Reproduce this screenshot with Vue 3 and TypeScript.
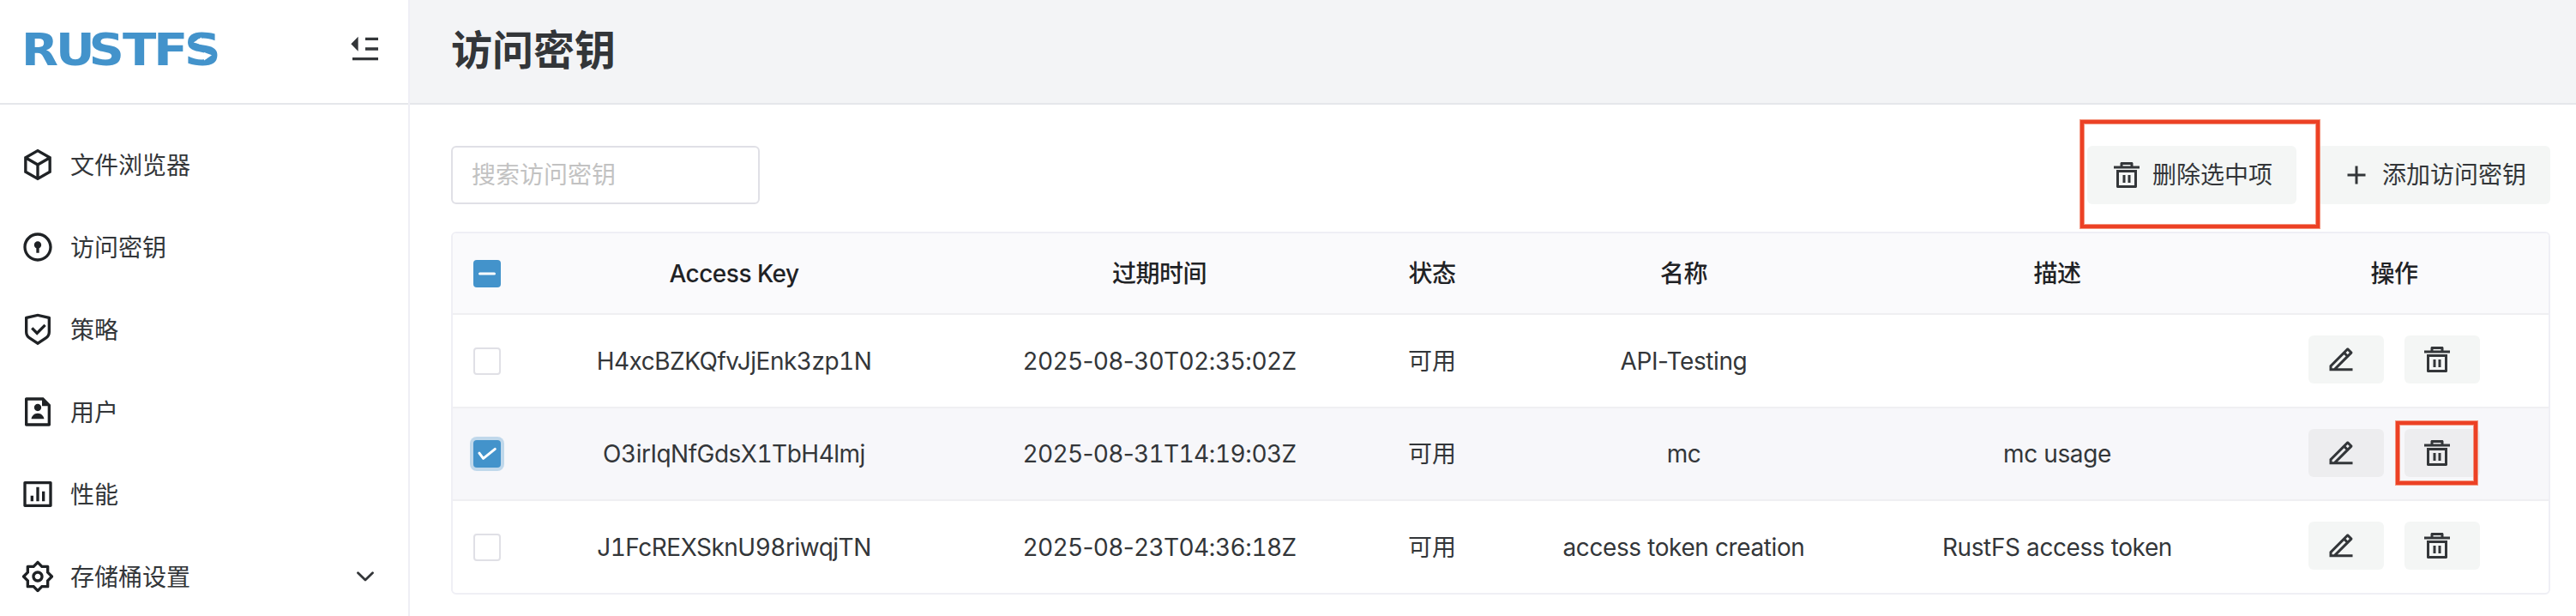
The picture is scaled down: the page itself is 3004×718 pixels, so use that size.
<script setup lang="ts">
interface NavItem {
  label: string
  icon: string
  expandable?: boolean
}

interface KeyRow {
  accessKey: string
  expiration: string
  status: string
  name: string
  description: string
  checked: boolean
}

interface LogoLetter {
  char: string
  x: number
  width: number
}

const logoLetters: LogoLetter[] = [
  { char: 'R', x: 0.9, width: 43 },
  { char: 'U', x: 41, width: 45.6 },
  { char: 'S', x: 79.6, width: 41.4 },
  { char: 'T', x: 119, width: 39.4 },
  { char: 'F', x: 155, width: 40.4 },
  { char: 'S', x: 190.7, width: 43 },
]

const icons: Record<string, string> = {
  box: 'M12 1L21.5 6.5V17.5L12 23L2.5 17.5V6.5L12 1ZM5.494 7.078L12 10.844L18.506 7.078L12 3.311L5.494 7.078ZM4.5 8.813V16.347L11 20.11V12.577L4.5 8.813ZM13 20.11L19.5 16.347V8.813L13 12.577V20.11Z',
  lock: 'M12 22C6.477 22 2 17.523 2 12S6.477 2 12 2S22 6.477 22 12S17.523 22 12 22ZM12 20C16.418 20 20 16.418 20 12S16.418 4 12 4S4 7.582 4 12S7.582 20 12 20ZM11 12.792C10.118 12.406 9.5 11.525 9.5 10.5C9.5 9.119 10.619 8 12 8S14.5 9.119 14.5 10.5C14.5 11.525 13.882 12.406 13 12.792V16H11V12.792Z',
  shield: 'M12 1L20.217 2.826C20.675 2.928 21 3.333 21 3.802V13.789C21 15.795 19.997 17.668 18.328 18.781L12 23L5.672 18.781C4.003 17.668 3 15.795 3 13.789V3.802C3 3.333 3.326 2.928 3.783 2.826L12 1ZM12 3.049L5 4.604V13.789C5 15.126 5.668 16.375 6.781 17.117L12 20.596L17.219 17.117C18.332 16.375 19 15.126 19 13.789V4.604L12 3.049ZM16.452 8.222L17.867 9.636L11.503 16L7.26 11.757L8.674 10.343L11.502 13.171L16.452 8.222Z',
  user: 'M15 4H5V20H19V8H15V4ZM3 2.992C3 2.444 3.447 2 3.999 2H16L21 7V20.993C21 21.549 20.555 22 20.007 22H3.993C3.445 22 3 21.545 3 21.008V2.992ZM12 11.5C10.619 11.5 9.5 10.381 9.5 9S10.619 6.5 12 6.5S14.5 7.619 14.5 9S13.381 11.5 12 11.5ZM7.527 17C7.776 14.75 9.684 13 12 13S16.224 14.75 16.473 17H7.527Z',
  chart: 'M3 3H21C21.552 3 22 3.448 22 4V20C22 20.552 21.552 21 21 21H3C2.448 21 2 20.552 2 20V4C2 3.448 2.448 3 3 3ZM4 5V19H20V5H4ZM7 13H9V17H7V13ZM11 7H13V17H11V7ZM15 10H17V17H15V10Z',
  gear: 'M8.686 4L11.293 1.393C11.684 1.003 12.317 1.003 12.707 1.393L15.314 4H19C19.552 4 20 4.448 20 5V8.686L22.607 11.293C22.997 11.684 22.997 12.317 22.607 12.707L20 15.314V19C20 19.552 19.552 20 19 20H15.314L12.707 22.607C12.317 22.997 11.684 22.997 11.293 22.607L8.686 20H5C4.448 20 4 19.552 4 19V15.314L1.393 12.707C1.003 12.317 1.003 11.684 1.393 11.293L4 8.686V5C4 4.448 4.448 4 5 4H8.686ZM6 6V9.515L3.515 12L6 14.485V18H9.515L12 20.485L14.485 18H18V14.485L20.485 12L18 9.515V6H14.485L12 3.515L9.515 6H6ZM12 16C9.791 16 8 14.209 8 12S9.791 8 12 8S16 9.791 16 12S14.209 16 12 16ZM12 14C13.105 14 14 13.105 14 12S13.105 10 12 10S10 10.895 10 12S10.895 14 12 14Z',
  fold: 'M21 18V20H3V18H21ZM21 11V13H12V11H21ZM21 4V6H12V4H21ZM7 3.5V13.7L2 8.6L7 3.5Z',
  trash: 'M4 8H20V21C20 21.552 19.552 22 19 22H5C4.448 22 4 21.552 4 21V8ZM6 10V20H18V10H6ZM9 12H11V18H9V12ZM13 12H15V18H13V12ZM7 5V3C7 2.448 7.448 2 8 2H16C16.552 2 17 2.448 17 3V5H22V7H2V5H7ZM9 4V5H15V4H9Z',
  edit: 'M5 18.89H6.414L15.728 9.576L14.314 8.162L5 17.476V18.89ZM21 20.89H3V16.647L16.435 3.212C16.826 2.822 17.459 2.822 17.849 3.212L20.678 6.041C21.068 6.431 21.068 7.064 20.678 7.455L9.243 18.89H21V20.89ZM15.728 6.748L17.142 8.162L18.556 6.748L17.142 5.334L15.728 6.748Z',
  plus: 'M11 11V5H13V11H19V13H13V19H11V13H5V11H11Z',
}

const navItems: NavItem[] = [
  { label: '文件浏览器', icon: 'box' },
  { label: '访问密钥', icon: 'lock' },
  { label: '策略', icon: 'shield' },
  { label: '用户', icon: 'user' },
  { label: '性能', icon: 'chart' },
  { label: '存储桶设置', icon: 'gear', expandable: true },
]

const columns: string[] = ['Access Key', '过期时间', '状态', '名称', '描述', '操作']

const rows: KeyRow[] = [
  { accessKey: 'H4xcBZKQfvJjEnk3zp1N', expiration: '2025-08-30T02:35:02Z', status: '可用', name: 'API-Testing', description: '', checked: false },
  { accessKey: 'O3irIqNfGdsX1TbH4lmj', expiration: '2025-08-31T14:19:03Z', status: '可用', name: 'mc', description: 'mc usage', checked: true },
  { accessKey: 'J1FcREXSknU98riwqjTN', expiration: '2025-08-23T04:36:18Z', status: '可用', name: 'access token creation', description: 'RustFS access token', checked: false },
]

// Digits get equal widths while separators keep their natural ones.
function timeParts(value: string): string[] {
  return value.split(/(\d+)/).filter((part) => part !== '')
}
</script>

<template>
  <div class="layout">
    <aside class="sidebar">
      <div class="brand">
        <svg class="logo" width="232" height="46" viewBox="0 0 232 46" aria-label="RUSTFS">
          <text
            v-for="letter in logoLetters"
            :key="letter.x"
            class="logo-text"
            y="42"
            :x="letter.x"
            :textLength="letter.width"
            lengthAdjust="spacingAndGlyphs"
          >{{ letter.char }}</text>
          <path class="logo-cut" d="M201.7 15.5L211 9.5V18Z" />
          <path class="logo-cut" d="M223 30.2L214 36.5V27Z" />
        </svg>
        <svg class="fold" viewBox="0 0 24 24"><path :d="icons.fold" /></svg>
      </div>
      <nav class="nav">
        <a v-for="item in navItems" :key="item.label" class="nav-item">
          <svg class="nav-icon" viewBox="0 0 24 24"><path fill-rule="evenodd" :d="icons[item.icon]" /></svg>
          <span class="nav-label">{{ item.label }}</span>
          <svg v-if="item.expandable" class="chevron" viewBox="0 0 20 12"><path d="M1.5 1.7L10 9.9L18.5 1.7" /></svg>
        </a>
      </nav>
    </aside>

    <main class="main">
      <header class="header"><h1 class="title">访问密钥</h1></header>

      <section class="content">
        <div class="toolbar">
          <input class="search" type="text" placeholder="搜索访问密钥" />
          <div class="toolbar-actions">
            <div class="marked">
              <button class="button">
                <svg class="icon" viewBox="0 0 24 24"><path fill-rule="evenodd" :d="icons.trash" /></svg>
                <span>删除选中项</span>
              </button>
              <i class="marker marker-toolbar"></i>
            </div>
            <button class="button">
              <svg class="icon" viewBox="0 0 24 24"><path :d="icons.plus" /></svg>
              <span>添加访问密钥</span>
            </button>
          </div>
        </div>

        <div class="table">
          <div class="row head">
            <div class="cell check-cell">
              <span class="checkbox filled">
                <svg viewBox="0 0 32 32"><path class="dash" d="M7.5 16H24.5" /></svg>
              </span>
            </div>
            <div v-for="column in columns" :key="column" class="cell">{{ column }}</div>
          </div>
          <div v-for="row in rows" :key="row.accessKey" class="row body-row" :class="{ active: row.checked }">
            <div class="cell check-cell">
              <span class="checkbox" :class="{ filled: row.checked, focused: row.checked }">
                <svg v-if="row.checked" viewBox="0 0 32 32"><path class="tick" d="M6.9 15.2L11.6 21.4L25.3 10.4" /></svg>
              </span>
            </div>
            <div class="cell key">{{ row.accessKey }}</div>
            <div class="cell">
              <time class="time"><span v-for="(part, i) in timeParts(row.expiration)" :key="i" class="time-part">{{ part }}</span></time>
            </div>
            <div class="cell">{{ row.status }}</div>
            <div class="cell tight">{{ row.name }}</div>
            <div class="cell tight">{{ row.description }}</div>
            <div class="cell actions">
              <button class="button small">
                <svg class="icon" viewBox="0 0 24 24"><path fill-rule="evenodd" :d="icons.edit" /></svg>
              </button>
              <div class="marked">
                <button class="button small">
                  <svg class="icon" viewBox="0 0 24 24"><path fill-rule="evenodd" :d="icons.trash" /></svg>
                </button>
                <i v-if="row.checked" class="marker marker-row"></i>
              </div>
            </div>
          </div>
        </div>
      </section>
    </main>
  </div>
</template>

<style>
body {
  margin: 0;
  background: #fff;
}
</style>

<style scoped>
.layout {
  display: flex;
  width: 3004px;
  height: 718px;
  overflow: hidden;
  box-sizing: border-box;
  background: #fff;
  color: #333639;
  font-family: Inter, "Noto Sans CJK SC", sans-serif;
  font-size: 28px;
  line-height: 44px;
}
.layout *,
.layout *::before {
  box-sizing: border-box;
}
svg {
  display: block;
  fill: currentColor;
}
.sidebar {
  width: 478px;
  flex: none;
  border-right: 2px solid #efeff5;
}
.brand {
  display: flex;
  align-items: center;
  justify-content: space-between;
  height: 122px;
  padding: 0 30px 6px 24px;
  border-bottom: 2px solid #e5e7eb;
}
.logo {
  overflow: visible;
  color: #4393cb;
}
.logo-text {
  font-family: "DejaVu Sans", sans-serif;
  font-weight: 700;
  font-size: 52px;
}
.logo-cut {
  fill: #fff;
}
.fold {
  width: 40px;
  height: 40px;
}
.nav {
  padding-top: 22px;
}
.nav-item {
  display: flex;
  align-items: center;
  height: 96px;
  padding: 0 40px 0 24px;
}
.nav-icon {
  width: 40px;
  height: 40px;
  margin-right: 18px;
  color: #1f2225;
}
.nav-label {
  flex: 1;
  padding-top: 2px;
}
.chevron {
  width: 20px;
  height: 12px;
}
.chevron path {
  fill: none;
  stroke: currentColor;
  stroke-width: 2.8;
  stroke-linecap: round;
  stroke-linejoin: round;
}
.main {
  flex: 1;
}
.header {
  display: flex;
  align-items: center;
  height: 122px;
  padding: 0 48px 2px;
  background: #f3f4f6;
  border-bottom: 2px solid #e5e7eb;
}
.title {
  margin: 0;
  font-size: 48px;
  line-height: 64px;
  font-weight: 700;
}
.content {
  padding: 48px 30px 0 48px;
}
.toolbar {
  display: flex;
  justify-content: space-between;
  margin-bottom: 32px;
}
.search {
  width: 360px;
  height: 68px;
  padding: 0 22px;
  border: 2px solid #e0e0e6;
  border-radius: 6px;
  background: #fff;
  font: inherit;
  outline: none;
}
.search::placeholder {
  color: #c2c2c2;
  opacity: 1;
}
.toolbar-actions {
  display: flex;
  gap: 24px;
}
.button {
  display: flex;
  align-items: center;
  gap: 12px;
  height: 68px;
  padding: 0 28px;
  border: 0;
  border-radius: 6px;
  background: #f4f6f5;
  color: #333639;
  font: inherit;
  white-space: nowrap;
}
.button.small {
  width: 88px;
  height: 56px;
  padding: 0 20px;
}
.icon {
  width: 36px;
  height: 36px;
  flex: none;
}
.marked {
  position: relative;
}
.marker {
  position: absolute;
  z-index: 1;
  border: 4px solid #ec4125;
  box-shadow: 0 0 0 1px #f3957f, inset 0 0 0 1px #f3957f;
  pointer-events: none;
}
.marker-toolbar {
  inset: -30px -27px -28px -8px;
}
.marker-row {
  inset: -9px 3px -9px -10px;
}
.table {
  border: 2px solid #efeff5;
  border-radius: 6px;
  overflow: hidden;
}
.row {
  display: grid;
  grid-template-columns: 79px 498px 494px 142px 445px 426px 360px;
  height: 109px;
  border-bottom: 2px solid #efeff2;
}
.row.head {
  height: 95px;
  background: #fafafc;
  color: #1f2225;
  font-weight: 500;
  letter-spacing: -0.5px;
}
.row.active {
  height: 108px;
  background: #f7f7fa;
}
.row:last-child {
  height: 107px;
  border-bottom: 0;
}
.cell {
  display: flex;
  align-items: center;
  justify-content: center;
}
.cell.tight {
  letter-spacing: -0.4px;
}
.cell.key {
  letter-spacing: -0.5px;
  font-variant-numeric: tabular-nums;
}
.time {
  letter-spacing: -0.65px;
}
.time-part:nth-child(odd) {
  font-variant-numeric: tabular-nums;
}
.check-cell {
  justify-content: flex-start;
  padding-left: 24px;
}
.actions {
  align-items: flex-start;
  gap: 24px;
  padding-top: 24px;
}
.active .button {
  background: #ededef;
}
.checkbox {
  width: 32px;
  height: 32px;
  border: 2px solid #e0e0e6;
  border-radius: 4px;
  background: #fff;
}
.checkbox.filled {
  border: 0;
  background: #4393cb;
}
.checkbox.focused {
  box-shadow: 0 0 0 4px rgba(67, 147, 203, 0.3);
}
.dash,
.tick {
  fill: none;
  stroke: #fff;
  stroke-width: 3;
  stroke-linecap: round;
  stroke-linejoin: round;
}
</style>
